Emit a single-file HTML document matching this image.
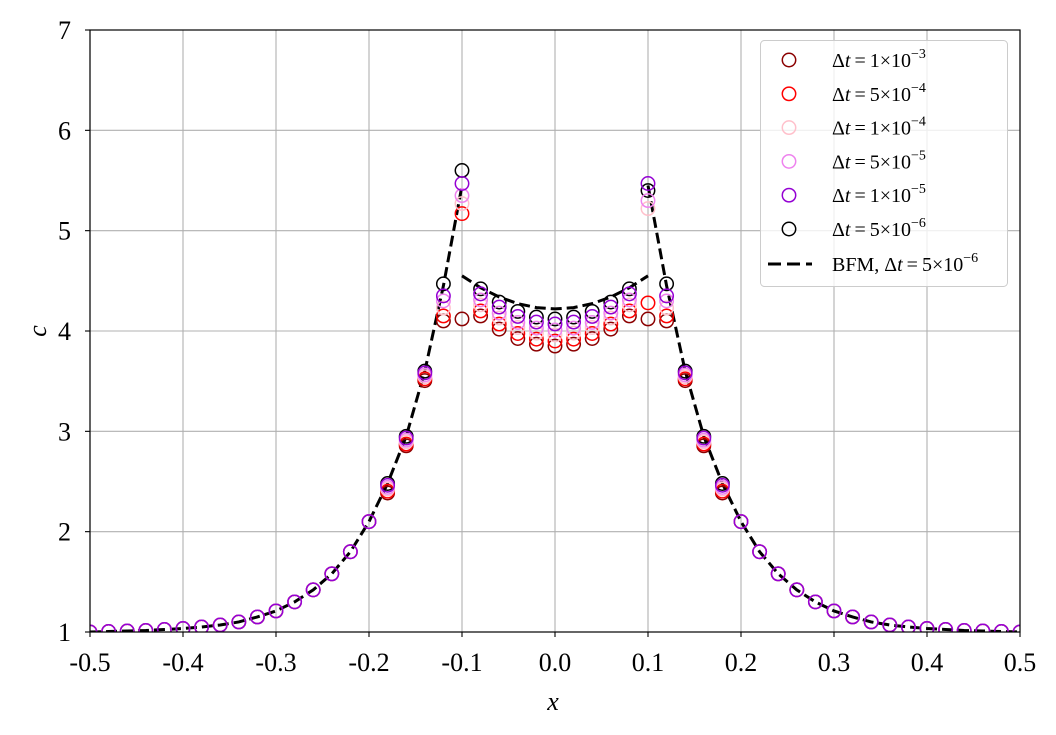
<!DOCTYPE html>
<html><head><meta charset="utf-8"><style>
html,body{margin:0;padding:0;background:#fff;}
svg{display:block;font-family:"Liberation Serif",serif;}
</style></head><body>
<svg id="s" width="1056" height="735" xmlns="http://www.w3.org/2000/svg"></svg>
<script>
const s=document.getElementById('s');
const X=x=>90+(x+0.5)*930, Y=c=>632-(c-1)*100.333;
let h='';
h+='<rect width="1056" height="735" fill="#fff"/>';
h+='<defs><clipPath id="cp"><rect x="90" y="30" width="930" height="602"/></clipPath></defs>';
for(let i=0;i<=10;i++){const x=X(-0.5+i*0.1);h+=`<line x1="${x}" y1="30" x2="${x}" y2="632" stroke="#b0b0b0" stroke-width="1.1"/>`;}
for(let c=1;c<=7;c++){h+=`<line x1="90" y1="${Y(c)}" x2="1020" y2="${Y(c)}" stroke="#b0b0b0" stroke-width="1.1"/>`;}
const tab={0.12:4.45,0.14:3.6,0.16:2.95,0.18:2.48,0.2:2.1,0.22:1.8,0.24:1.58,0.26:1.42,0.28:1.3,0.3:1.21,0.32:1.15,0.34:1.1,0.36:1.07,0.38:1.05,0.4:1.035,0.42:1.025,0.44:1.015,0.46:1.01,0.48:1.005,0.5:1.0};
function outer(a){return tab[(Math.round(a*50)/50)];}
const series=[
 {col:'#8b0000',off:-0.27,pl:4.12,pr:4.12,o12:-0.35},
 {col:'#ff0000',off:-0.22,pl:5.17,pr:4.28,o12:-0.3},
 {col:'#ffc0cb',off:-0.16,pl:5.27,pr:5.22,o12:-0.22},
 {col:'#ee82ee',off:-0.11,pl:5.35,pr:5.3,o12:-0.15},
 {col:'#9400d3',off:-0.05,pl:5.47,pr:5.47,o12:-0.1},
 {col:'#000000',off:0,pl:5.6,pr:5.4,o12:0.02}
];
let p1=[],p2=[],p3=[];
for(let k=-25;k<=-5;k++){const x=k/50;let c=(k==-5)?5.45:outer(Math.abs(x));p1.push(X(x)+','+Y(c));}
for(let k=-5;k<=5;k++){const x=k/50;p2.push(X(x)+','+Y(4.22+0.33*(x/0.1)**2));}
for(let k=5;k<=25;k++){const x=k/50;let c=(k==5)?5.45:outer(x);p3.push(X(x)+','+Y(c));}
let g='<g clip-path="url(#cp)">';
for(const p of [p1,p2,p3])g+=`<polyline points="${p.join(' ')}" fill="none" stroke="#000" stroke-width="3" stroke-dasharray="11,5"/>`;
const order=[5,0,1,2,3,4];
for(const idx of order){const sr=series[idx];
 for(let k=-25;k<=25;k++){const x=k/50;const a=Math.abs(k);let c;
  if(a<5){c=4.12+sr.off+0.3*(x/0.08)**2;}
  else if(a==5){c=k<0?sr.pl:sr.pr;}
  else if(a==6){c=4.45+sr.o12;}
  else{c=outer(Math.abs(x));if(a<=9)c+=sr.off*0.35;}
  g+=`<circle cx="${X(x)}" cy="${Y(c)}" r="6.7" fill="none" stroke="${sr.col}" stroke-width="1.5"/>`;}
}
g+='</g>';
h+=g;
h+='<rect x="90" y="30" width="930" height="602" fill="none" stroke="#000" stroke-width="1.2"/>';
for(let i=0;i<=10;i++){const v=-0.5+i*0.1;const x=X(v);h+=`<line x1="${x}" y1="632" x2="${x}" y2="637" stroke="#000" stroke-width="1.1"/>`;
 h+=`<text x="${x}" y="671" font-size="26" text-anchor="middle">${v.toFixed(1)}</text>`;}
for(let c=1;c<=7;c++){h+=`<line x1="85" y1="${Y(c)}" x2="90" y2="${Y(c)}" stroke="#000" stroke-width="1.1"/><text x="71" y="${Y(c)+9}" font-size="26" text-anchor="end">${c}</text>`;}
h+='<text x="553" y="710" font-size="26" font-style="italic" text-anchor="middle">x</text>';
h+='<text x="38" y="331" font-size="26" font-style="italic" text-anchor="middle" transform="rotate(-90 38 331)" dy="8">c</text>';
h+='<rect x="760.5" y="40.5" width="247" height="246" rx="4" fill="#fff" fill-opacity="0.8" stroke="#ccc" stroke-width="1"/>';
const labs=[['1','3'],['5','4'],['1','4'],['5','5'],['1','5'],['5','6']];
function lab(x,y,pre,m,e){return `<text x="${x}" y="${y}" font-size="20">${pre}Δ<tspan font-style="italic">t</tspan><tspan dx="4">=</tspan><tspan dx="4">${m}×10</tspan><tspan dy="-9" font-size="14">−${e}</tspan></text>`;}
for(let i=0;i<6;i++){const y=60+i*33.8;
 h+=`<circle cx="789" cy="${y}" r="6.7" fill="none" stroke="${series[i].col}" stroke-width="1.5"/>`;
 h+=lab(832,y+7,'',labs[i][0],labs[i][1]);}
h+='<line x1="768" y1="264" x2="812" y2="264" stroke="#000" stroke-width="3" stroke-dasharray="13,6"/>';
h+=lab(832,271,'BFM, ','5','6');
s.innerHTML=h;
</script>
</body></html>
